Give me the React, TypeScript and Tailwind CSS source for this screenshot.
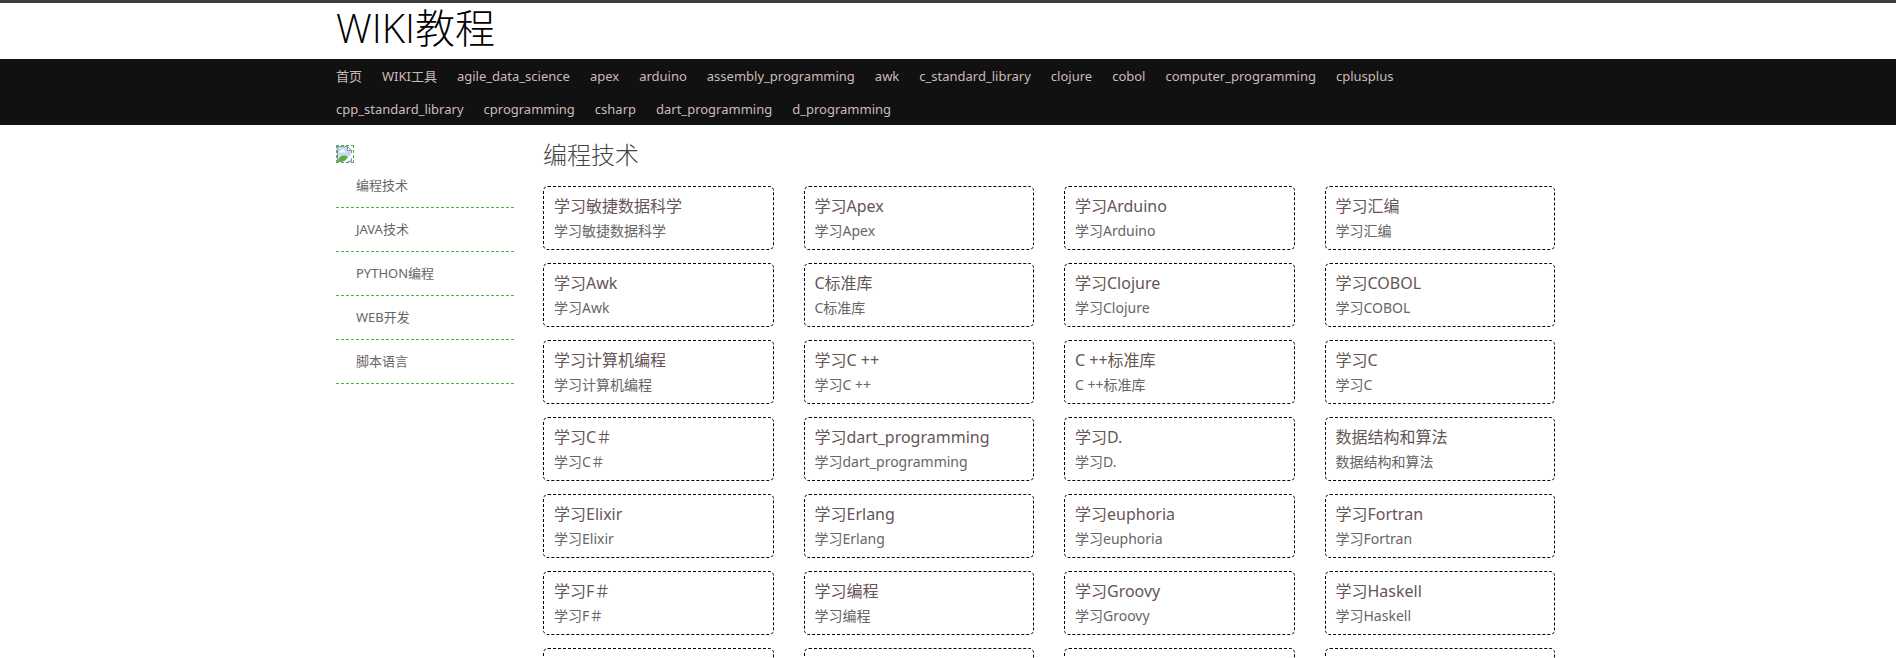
const navItems = [
    "首页",
    "WIKI工具",
    "agile_data_science",
    "apex",
    "arduino",
    "assembly_programming",
    "awk",
    "c_standard_library",
    "clojure",
    "cobol",
    "computer_programming",
    "cplusplus",
    "cpp_standard_library",
    "cprogramming",
    "csharp",
    "dart_programming",
    "d_programming",
];

const categories = ["编程技术", "JAVA技术", "PYTHON编程", "WEB开发", "脚本语言"];

const courses = [
    "学习敏捷数据科学",
    "学习Apex",
    "学习Arduino",
    "学习汇编",
    "学习Awk",
    "C标准库",
    "学习Clojure",
    "学习COBOL",
    "学习计算机编程",
    "学习C ++",
    "C ++标准库",
    "学习C",
    "学习C＃",
    "学习dart_programming",
    "学习D.",
    "数据结构和算法",
    "学习Elixir",
    "学习Erlang",
    "学习euphoria",
    "学习Fortran",
    "学习F＃",
    "学习编程",
    "学习Groovy",
    "学习Haskell",
    "学习Java",
    "学习JavaScript",
    "学习Julia",
    "学习Kotlin",
];

function BrokenImage() {
    return (
        <svg className="w-4 h-4" viewBox="0 0 16 16" role="img" aria-label="logo">
            <path d="M.5.5h10l4 4v11H.5z" fill="#c3d7f7" />
            <path d="M2.500 6a1.500 1.500 0 0 1 1.500-1.500 1.800 1.800 0 0 1 3.400 0A1.200 1.200 0 0 1 8 6.500H3z" fill="#fff" />
            <path d="M1 15c.5-3 3-5.500 6-5.500 2.500 0 4 1.500 4.500 3L9 15z" fill="#5aac36" />
            <path d="M16 6.500 6.500 16H10l6-5z" fill="#fff" />
            <path d="M6 15.500H.5V.5h10l4 4V7M11 15.500h3.500V12" fill="none" stroke="#8f959c" />
            <path d="M10.500.5v4h4z" fill="#fff" stroke="#8f959c" />
        </svg>
    );
}

export default function App() {
    return (
        <div className="bg-white border-t-3 border-[#3c3c3c] text-[#666] font-['Noto_Sans','Noto_Sans_CJK_SC',sans-serif]">
            <header>
                <div className="mx-auto max-w-[1224px] pr-1">
                    <h1 className="h-14 text-[40px] leading-[50px] font-light text-black font-['Open_Sans','Noto_Sans_CJK_SC',sans-serif]">WIKI教程</h1>
                </div>
            </header>

            <nav className="bg-[#111]">
                <ul className="mx-auto max-w-[1224px] pr-36 flex flex-wrap gap-x-5">
                    {navItems.map((item) => (
                        <li key={item}>
                            <a href="#" className="block pt-0.5 text-[13px] leading-[31px] text-[#cbb]">{item}</a>
                        </li>
                    ))}
                </ul>
            </nav>

            <div className="mx-auto max-w-[1224px] pr-[5px] pt-5 grid grid-cols-[178px_1fr] gap-[29px]">
                {/* Left: categories */}
                <aside>
                    <a href="#" className="block w-[18px] mb-px border border-dashed border-[#4caf50]">
                        <BrokenImage />
                    </a>
                    <ul>
                        {categories.map((name) => (
                            <li key={name} className="border-b border-dashed border-[#4caf50]">
                                <a href="#" className="block px-5 text-[13px] leading-[43px]">{name}</a>
                            </li>
                        ))}
                    </ul>
                </aside>

                {/* Right: course cards */}
                <main>
                    <h2 className="mb-[21px] text-2xl leading-5 font-light text-[#444]">编程技术</h2>
                    <div className="grid grid-cols-4 gap-x-[30px] gap-y-[13px]">
                        {courses.map((name) => (
                            <a key={name} href="#" className="block h-16 px-[10px] pt-[7px] border border-dashed border-black rounded-[5px]">
                                <h3 className="text-base leading-6 text-[#655]">{name}</h3>
                                <p className="text-sm leading-[26px]">{name}</p>
                            </a>
                        ))}
                    </div>
                </main>
            </div>
        </div>
    );
}
